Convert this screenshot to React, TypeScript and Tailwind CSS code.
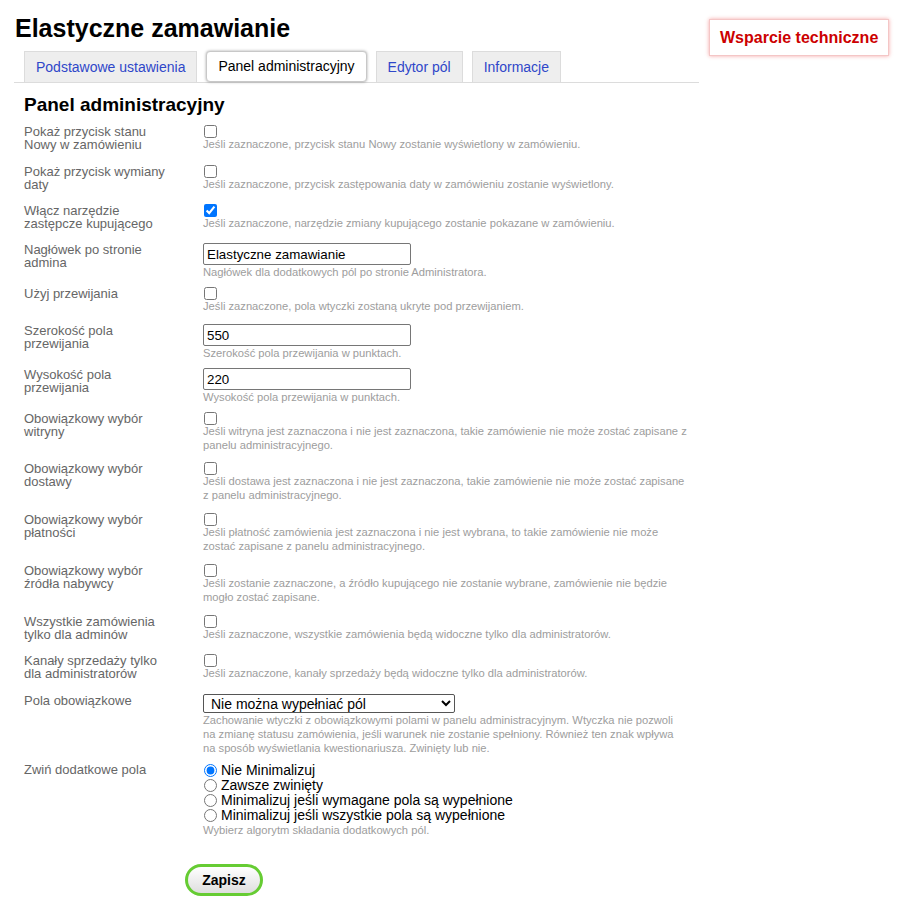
import type { ReactNode } from "react";

const tabs = [
  { name: "Podstawowe ustawienia", active: false },
  { name: "Panel administracyjny", active: true },
  { name: "Edytor pól", active: false },
  { name: "Informacje", active: false },
];

const radios = [
  "Nie Minimalizuj",
  "Zawsze zwinięty",
  "Minimalizuj jeśli wymagane pola są wypełnione",
  "Minimalizuj jeśli wszystkie pola są wypełnione",
];

function Row({ label, pb, children }: { label: string; pb: string; children: ReactNode }) {
  return (
    <div className={`flex ${pb}`}>
      <div className="w-[179px] shrink-0 pr-[29px] text-[13px] leading-[13px] text-[#666]">{label}</div>
      <div className="w-[488px]">{children}</div>
    </div>
  );
}

function Desc({ children, className = "" }: { children: ReactNode; className?: string }) {
  return <p className={`text-[11.2px] leading-[14px] text-[#9d9d9d] ${className}`}>{children}</p>;
}

function Check({ checked = false, desc }: { checked?: boolean; desc: string }) {
  return (
    <>
      <input type="checkbox" defaultChecked={checked} className="m-0 ml-px block h-[13px] w-[13px]" />
      <Desc className="-mt-px">{desc}</Desc>
    </>
  );
}

function Text({ value, desc }: { value: string; desc: string }) {
  return (
    <>
      <input
        type="text"
        defaultValue={value}
        className="block h-[22px] w-[208px] rounded-[2px] border border-[#767676] px-[3px] text-[13.33px] text-black outline-none"
      />
      <Desc>{desc}</Desc>
    </>
  );
}

export default function App() {
  return (
    <div className="min-h-screen bg-white font-['Liberation_Sans',Arial,sans-serif] text-black">
      <div className="flex items-start">
        <div className="ml-[14px] w-[685px]">
          <h1 className="pl-px pt-[13px] text-[25px] font-bold leading-[30px]">Elastyczne zamawianie</h1>

          <div className="mt-[8px] flex gap-[9px] border-b border-[#dcdcdc] pl-[10px]">
            {tabs.map((t) =>
              t.active ? (
                <div
                  key={t.name}
                  className="h-[31px] rounded-[4px] border border-[#c8c8c8] bg-white px-[11px] text-[14px] leading-[29px] text-black shadow-[0_0_3px_rgba(0,0,0,0.35)]"
                >
                  {t.name}
                </div>
              ) : (
                <a
                  key={t.name}
                  href="#"
                  className="h-[31px] border border-b-0 border-[#dcdcdc] bg-[#eeeeee] px-[11px] text-[14px] leading-[30px] text-[#2f47c9]"
                >
                  {t.name}
                </a>
              ),
            )}
          </div>

          <div className="pl-[10px]">
            <h2 className="mt-[11px] text-[19px] font-bold leading-[22px]">Panel administracyjny</h2>

            <div className="mt-[9px]">
              <Row label="Pokaż przycisk stanu Nowy w zamówieniu" pb="pb-[14px]">
                <Check desc="Jeśli zaznaczone, przycisk stanu Nowy zostanie wyświetlony w zamówieniu." />
              </Row>
              <Row label="Pokaż przycisk wymiany daty" pb="pb-[13px]">
                <Check desc="Jeśli zaznaczone, przycisk zastępowania daty w zamówieniu zostanie wyświetlony." />
              </Row>
              <Row label="Włącz narzędzie zastępcze kupującego" pb="pb-[13px]">
                <Check checked desc="Jeśli zaznaczone, narzędzie zmiany kupującego zostanie pokazane w zamówieniu." />
              </Row>
              <Row label="Nagłówek po stronie admina" pb="pb-[8px]">
                <Text value="Elastyczne zamawianie" desc="Nagłówek dla dodatkowych pól po stronie Administratora." />
              </Row>
              <Row label="Użyj przewijania" pb="pb-[11px]">
                <Check desc="Jeśli zaznaczone, pola wtyczki zostaną ukryte pod przewijaniem." />
              </Row>
              <Row label="Szerokość pola przewijania" pb="pb-[8px]">
                <Text value="550" desc="Szerokość pola przewijania w punktach." />
              </Row>
              <Row label="Wysokość pola przewijania" pb="pb-[8px]">
                <Text value="220" desc="Wysokość pola przewijania w punktach." />
              </Row>
              <Row label="Obowiązkowy wybór witryny" pb="pb-[10px]">
                <Check desc="Jeśli witryna jest zaznaczona i nie jest zaznaczona, takie zamówienie nie może zostać zapisane z panelu administracyjnego." />
              </Row>
              <Row label="Obowiązkowy wybór dostawy" pb="pb-[11px]">
                <Check desc="Jeśli dostawa jest zaznaczona i nie jest zaznaczona, takie zamówienie nie może zostać zapisane z panelu administracyjnego." />
              </Row>
              <Row label="Obowiązkowy wybór płatności" pb="pb-[11px]">
                <Check desc="Jeśli płatność zamówienia jest zaznaczona i nie jest wybrana, to takie zamówienie nie może zostać zapisane z panelu administracyjnego." />
              </Row>
              <Row label="Obowiązkowy wybór źródła nabywcy" pb="pb-[11px]">
                <Check desc="Jeśli zostanie zaznaczone, a źródło kupującego nie zostanie wybrane, zamówienie nie będzie mogło zostać zapisane." />
              </Row>
              <Row label="Wszystkie zamówienia tylko dla adminów" pb="pb-[13px]">
                <Check desc="Jeśli zaznaczone, wszystkie zamówienia będą widoczne tylko dla administratorów." />
              </Row>
              <Row label="Kanały sprzedaży tylko dla administratorów" pb="pb-[14px]">
                <Check desc="Jeśli zaznaczone, kanały sprzedaży będą widoczne tylko dla administratorów." />
              </Row>
              <Row label="Pola obowiązkowe" pb="pb-[8px]">
                <select
                  defaultValue="none"
                  className="block h-[19px] w-[252px] rounded-[2px] border border-[#555] pl-[3px] text-[14px] leading-[17px] text-black"
                >
                  <option value="none">Nie można wypełniać pól</option>
                </select>
                <Desc className="w-[480px]">
                  Zachowanie wtyczki z obowiązkowymi polami w panelu administracyjnym. Wtyczka nie pozwoli na zmianę
                  statusu zamówienia, jeśli warunek nie zostanie spełniony. Również ten znak wpływa na sposób wyświetlania
                  kwestionariusza. Zwinięty lub nie.
                </Desc>
              </Row>
              <Row label="Zwiń dodatkowe pola" pb="pb-0">
                <div>
                  {radios.map((r, i) => (
                    <label key={r} className="flex h-[15px] items-center text-[14px] leading-[15px] text-black">
                      <input
                        type="radio"
                        name="collapse"
                        defaultChecked={i === 0}
                        className="m-0 ml-px mr-[4px] h-[13px] w-[13px]"
                      />
                      {r}
                    </label>
                  ))}
                </div>
                <Desc>Wybierz algorytm składania dodatkowych pól.</Desc>
              </Row>
            </div>

            <button
              type="button"
              className="ml-[161px] mt-[27px] h-[32px] w-[78px] rounded-full border-[3px] border-[#66cc33] bg-gradient-to-b from-white to-[#dedede] text-[14px] font-bold text-black"
            >
              Zapisz
            </button>
          </div>
        </div>

        <a
          href="#"
          className="ml-[10px] mt-[19px] flex h-[37px] items-center border border-[#f4c6c6] bg-white px-[10px] text-[16px] font-bold text-[#cc0000] shadow-[0_0_4px_rgba(230,0,0,0.35)]"
        >
          Wsparcie techniczne
        </a>
      </div>
    </div>
  );
}
